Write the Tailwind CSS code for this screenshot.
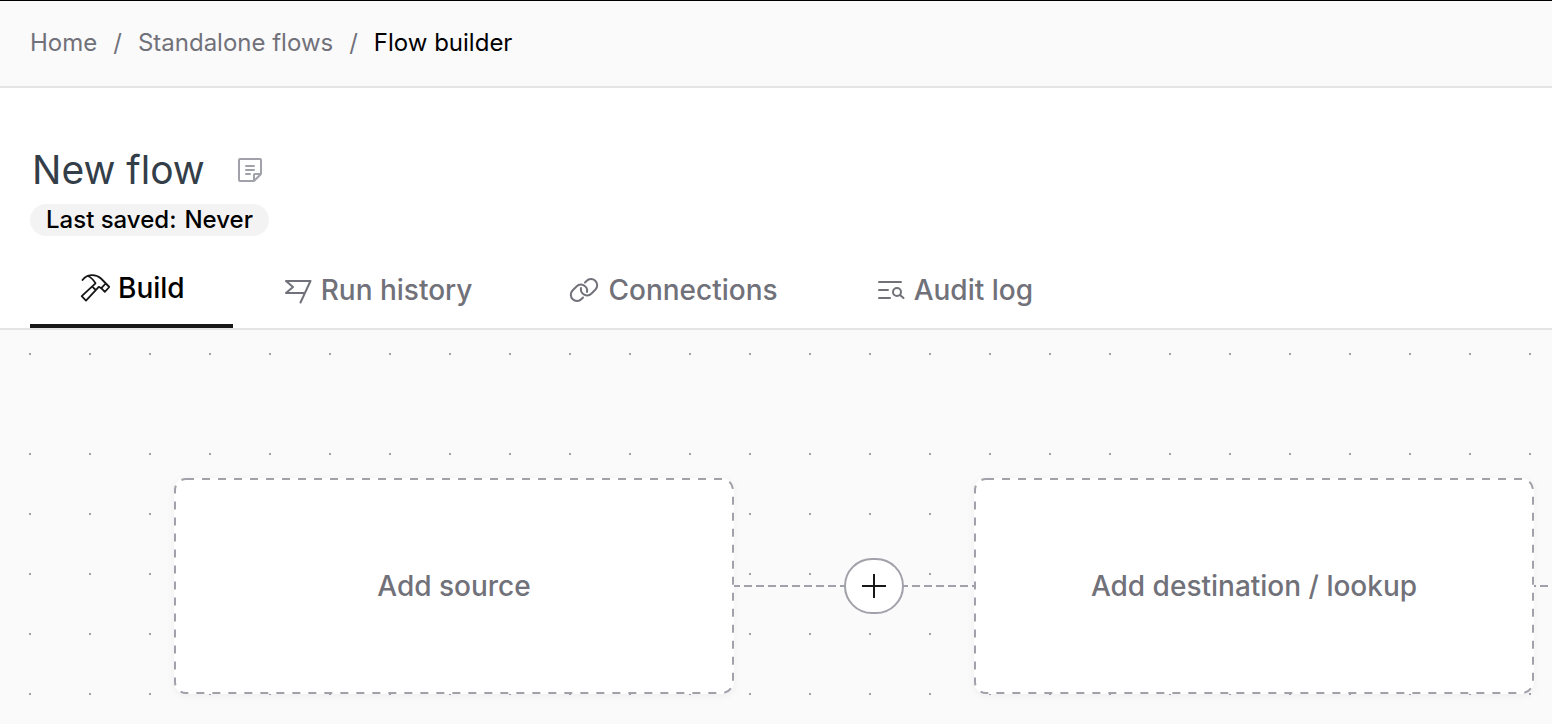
<!DOCTYPE html>
<html lang="en">
<head>
  <meta charset="UTF-8">
  <meta name="viewport" content="width=device-width, initial-scale=1.0">
  <title>Flow builder</title>
  <script src="https://cdn.jsdelivr.net/npm/@tailwindcss/browser@4"></script>
</head>
<body class="min-h-screen flex flex-col overflow-x-hidden bg-white font-['Inter',sans-serif] text-[#71717a]">

  <!-- Breadcrumb -->
  <nav aria-label="Breadcrumb" class="h-[88px] px-[30px] pb-[2px] flex items-center bg-[#fafafa] border-t border-t-black border-b-2 border-b-[#e4e4e4]">
    <ol class="flex gap-4 text-2xl">
      <li><a href="#" class="hover:underline">Home</a></li>
      <li aria-hidden="true">/</li>
      <li><a href="#" class="hover:underline">Standalone flows</a></li>
      <li aria-hidden="true">/</li>
      <li aria-current="page" class="text-black">Flow builder</li>
    </ol>
  </nav>

  <!-- Flow title -->
  <header class="px-[30px] pt-14">
    <div class="flex items-center gap-8">
      <h1 class="pl-[2px] text-[39px] leading-[52px] text-[#333e48]">New flow</h1>
      <button type="button" aria-label="Flow description" class="text-[#a1a1aa]">
        <svg class="size-7" viewBox="0 0 28 28" fill="none" stroke="currentColor" stroke-width="2" stroke-linecap="round" stroke-linejoin="round">
          <path d="M17 25H3a1 1 0 0 1-1-1V4a1 1 0 0 1 1-1h20a1 1 0 0 1 1 1v14l-7 7zM17 25v-6a1 1 0 0 1 1-1h6"/>
          <path d="M9 10h8M9 14h8M9 18h4"/>
        </svg>
      </button>
    </div>
    <p class="mt-2 flex w-fit gap-2 rounded-full bg-[#f3f3f3] px-4 text-2xl leading-8 font-medium text-black">
      <span>Last saved:</span>
      <span>Never</span>
    </p>
  </header>

  <!-- Tabs -->
  <nav aria-label="Flow sections" class="h-[94px] px-[30px] flex items-end border-b-2 border-[#e4e4e4] text-[28px] leading-[36px] font-medium">
    <a href="#" aria-current="page" class="flex items-center gap-2 px-12 pb-[18px] border-b-4 border-[#171717] text-black">
      <svg class="size-8 text-[#171717]" viewBox="0 0 32 32" fill="none" stroke="currentColor" stroke-width="1.8" stroke-linecap="round" stroke-linejoin="round">
        <path d="M4.5 8C9 2 17.5 1.5 23 6.5l8.3 8.5-4.5 4.8-3.5-3.6 4.4-4.7"/>
        <path d="M10 4c3 1.3 5.5 4 7.5 7.3L3.7 24.2 8 28.6 20.8 14.8l2.5 1.4M14.2 14.6l3.6 3.4"/>
      </svg>
      Build
    </a>
    <a href="#" class="flex items-center gap-2 px-12 pb-5">
      <svg class="size-8" viewBox="0 0 32 32" fill="none" stroke="currentColor" stroke-width="2" stroke-linecap="round" stroke-linejoin="round">
        <path d="M19.5 28.5 29.5 7H5l7 6-7 6h19"/>
      </svg>
      Run history
    </a>
    <a href="#" class="flex items-center gap-2 px-12 pb-5">
      <svg class="size-8" viewBox="0 0 32 32" fill="none" stroke="currentColor" stroke-width="2" stroke-linecap="round" stroke-linejoin="round">
        <path d="m17 8.5 1.5-1.5a6 6 0 0 1 9 8.5l-4 4a6.2 6.2 0 0 1-10.5-5.5"/>
        <path d="m15 23.5-1.5 1.5a6 6 0 0 1-9-8.5l4-4a6.2 6.2 0 0 1 10.5 5.5"/>
      </svg>
      Connections
    </a>
    <a href="#" class="flex items-center gap-2 px-12 pb-5">
      <svg class="size-8" viewBox="0 0 32 32" fill="none" stroke="currentColor" stroke-width="2" stroke-linecap="round" stroke-linejoin="round">
        <path d="M5 8h22M5 16h9M5 24h11M26 21l3.5 3"/>
        <circle cx="23" cy="18" r="4"/>
      </svg>
      Audit log
    </a>
  </nav>

  <!-- Canvas -->
  <main class="flex-1 flex flex-col gap-[14px] bg-[#fafafa]">
    <div class="h-20 bg-[radial-gradient(circle,#a1a1aa_1px,transparent_1px)] bg-[length:60px_60px] bg-[position:0_-6px]"></div>

    <div class="flex-1 flex items-start overflow-hidden pt-[54px] pl-[174px] bg-[radial-gradient(circle,#a1a1aa_1px,transparent_1px)] bg-[length:60px_60px]">
      <button type="button" class="relative shrink-0 w-[560px] h-[216px] rounded-xl bg-white shadow-[0_2px_8px_rgba(0,0,0,0.05)] text-[28px] font-medium">
        <svg class="absolute inset-0 size-full" fill="none" stroke="#a1a1aa" stroke-width="2" stroke-dasharray="8" aria-hidden="true">
          <rect x="1" y="1" width="558" height="214" rx="11"/>
        </svg>
        Add source
      </button>

      <div class="relative shrink-0 w-[240px] h-[216px] pr-[70px] flex items-center justify-end">
        <svg class="absolute inset-0 size-full" stroke="#a1a1aa" stroke-width="2" stroke-dasharray="8 4" stroke-dashoffset="2" aria-hidden="true">
          <line x1="0" y1="108" x2="240" y2="108"/>
        </svg>
        <button type="button" aria-label="Add step" class="relative w-[60px] h-14 flex items-center justify-center rounded-[28px] border-2 border-[#a1a1aa] bg-white text-[#171717]">
          <svg class="size-6" viewBox="0 0 24 24" fill="none" stroke="currentColor" stroke-width="2">
            <path d="M12 0v24M0 12h24"/>
          </svg>
        </button>
      </div>

      <button type="button" class="relative shrink-0 w-[560px] h-[216px] rounded-xl bg-white shadow-[0_2px_8px_rgba(0,0,0,0.05)] text-[28px] font-medium">
        <svg class="absolute inset-0 size-full" fill="none" stroke="#a1a1aa" stroke-width="2" stroke-dasharray="8" aria-hidden="true">
          <rect x="1" y="1" width="558" height="214" rx="11"/>
        </svg>
        Add destination / lookup
      </button>

      <svg class="flex-1 h-[216px]" stroke="#a1a1aa" stroke-width="2" stroke-dasharray="8 4" stroke-dashoffset="6" aria-hidden="true">
        <line x1="0" y1="108" x2="100%" y2="108"/>
      </svg>
    </div>
  </main>
</body>
</html>
